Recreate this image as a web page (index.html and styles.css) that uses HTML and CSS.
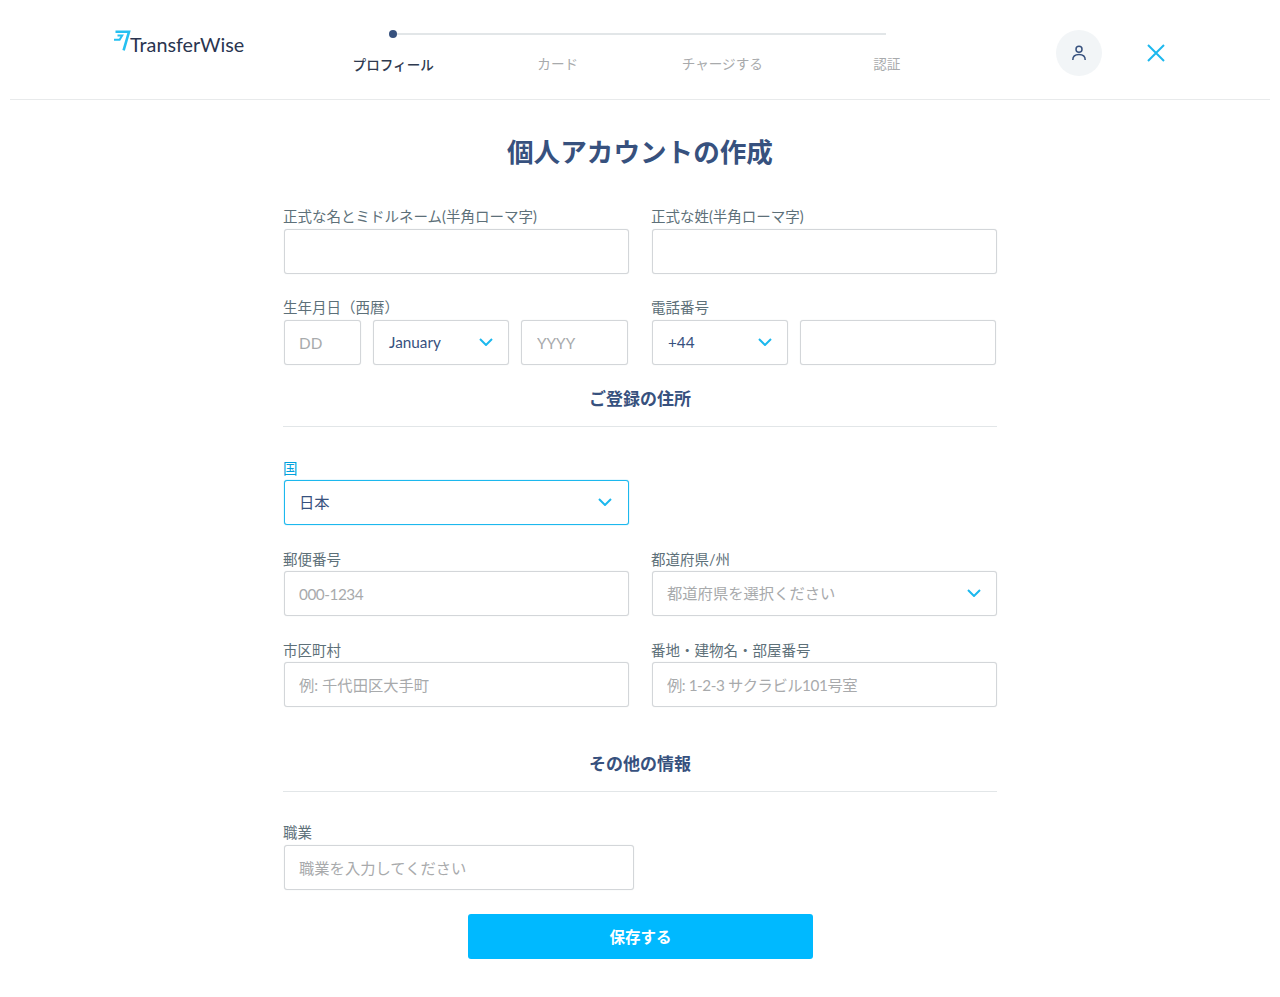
FILE: index.html
```html
<!DOCTYPE html>
<html lang="ja">
<head>
<meta charset="utf-8">
<title>個人アカウントの作成</title>
<link rel="stylesheet" href="styles.css">
</head>
<body>
<header class="topbar">
  <div class="logo">
    <svg class="logo-mark" width="18" height="21" viewBox="0 0 18 21" fill="none" stroke="#25c0f1"><path stroke-width="2.6" d="M1.5 1.8 H15 L9.6 20.4"/><path stroke-width="2" d="M3.5 5.4 H8.2 L5.6 9.8 H0"/></svg>
    <span class="logo-text">TransferWise</span>
  </div>
  <nav class="stepper">
    <div class="step step-active">プロフィール</div>
    <div class="step">カード</div>
    <div class="step">チャージする</div>
    <div class="step">認証</div>
  </nav>
  <div class="avatar">
    <svg width="18" height="18" viewBox="0 0 18 18" fill="none" stroke="#37517e" stroke-width="1.5"><circle cx="9" cy="5.2" r="3"/><path d="M2.8 16 C2.8 12.4 5 10.6 9 10.6 C13 10.6 15.2 12.4 15.2 16"/></svg>
  </div>
  <svg class="close" width="18" height="18" viewBox="0 0 18 18" fill="none" stroke="#1cb8ee" stroke-width="2"><path d="M1 1 L17 17 M17 1 L1 17"/></svg>
</header>

<main class="form">
  <h1 class="title">個人アカウントの作成</h1>

  <div class="row">
    <div class="field">
      <label class="label">正式な名とミドルネーム(半角ローマ字)</label>
      <input class="input" type="text">
    </div>
    <div class="field">
      <label class="label">正式な姓(半角ローマ字)</label>
      <input class="input" type="text">
    </div>
  </div>

  <div class="row">
    <div class="field">
      <label class="label">生年月日（西暦）</label>
      <div class="dob">
        <input class="input" type="text" placeholder="DD">
        <div class="select"><span>January</span><svg class="chev" width="14" height="8" viewBox="0 0 14 8"><path d="M1 1 L7 7 L13 1" fill="none" stroke="#1cb8ee" stroke-width="2"/></svg></div>
        <input class="input" type="text" placeholder="YYYY">
      </div>
    </div>
    <div class="field">
      <label class="label">電話番号</label>
      <div class="phone">
        <div class="select"><span>+44</span><svg class="chev" width="14" height="8" viewBox="0 0 14 8"><path d="M1 1 L7 7 L13 1" fill="none" stroke="#1cb8ee" stroke-width="2"/></svg></div>
        <input class="input" type="text">
      </div>
    </div>
  </div>

  <h2 class="section section-first">ご登録の住所</h2>

  <div class="row row-low">
    <div class="field">
      <label class="label label-focus">国</label>
      <div class="select select-focus"><span>日本</span><svg class="chev" width="14" height="8" viewBox="0 0 14 8"><path d="M1 1 L7 7 L13 1" fill="none" stroke="#1cb8ee" stroke-width="2"/></svg></div>
    </div>
  </div>

  <div class="row row-low">
    <div class="field">
      <label class="label">郵便番号</label>
      <input class="input input-tight" type="text" placeholder="000-1234">
    </div>
    <div class="field">
      <label class="label">都道府県/州</label>
      <div class="select select-empty"><span>都道府県を選択ください</span><svg class="chev" width="14" height="8" viewBox="0 0 14 8"><path d="M1 1 L7 7 L13 1" fill="none" stroke="#1cb8ee" stroke-width="2"/></svg></div>
    </div>
  </div>

  <div class="row row-low">
    <div class="field">
      <label class="label">市区町村</label>
      <input class="input" type="text" placeholder="例: 千代田区大手町">
    </div>
    <div class="field">
      <label class="label">番地・建物名・部屋番号</label>
      <input class="input input-tight" type="text" placeholder="例: 1-2-3 サクラビル101号室">
    </div>
  </div>

  <h2 class="section section-second">その他の情報</h2>

  <div class="field field-job">
    <label class="label">職業</label>
    <input class="input" type="text" placeholder="職業を入力してください">
  </div>

  <button class="submit" type="button">保存する</button>
</main>
</body>
</html>
```
FILE: styles.css
```css
* { box-sizing: border-box; }
html, body { margin: 0; padding: 0; }
body {
  background: #fff;
  font-family: Lato, "Noto Sans CJK JP", sans-serif;
  color: #37517e;
  height: 997px;
  overflow: hidden;
}
.topbar {
  display: flex;
  align-items: flex-start;
  height: 100px;
  margin: 0 10px -1px;
  border-bottom: 1px solid #e8eaeb;
}
.logo {
  display: flex;
  align-items: flex-start;
  width: 197px;
  margin-left: 104px;
  padding-top: 30px;
}
.logo-mark { flex: none; }
.logo-text {
  margin: 1px 0 0 -2px;
  font-family: Lato, sans-serif;
  font-size: 19.8px;
  line-height: 26px;
  color: #2a3550;
}
.stepper {
  position: relative;
  display: grid;
  grid-template-columns: repeat(4, 164.5px);
  width: 658px;
  padding-top: 54px;
}
.stepper::before {
  content: "";
  position: absolute;
  left: 82px;
  right: 83px;
  top: 33px;
  height: 2px;
  background: #e2e6e8;
}
.stepper::after {
  content: "";
  position: absolute;
  left: 78px;
  top: 30px;
  width: 8px;
  height: 8px;
  border-radius: 50%;
  background: #37517e;
}
.step {
  text-align: center;
  font-size: 13.6px;
  line-height: 20px;
  color: #a8aaac;
}
.step-active { color: #2e3a4f; font-weight: 500; padding-top: 1px; }
.avatar {
  display: flex;
  align-items: center;
  justify-content: center;
  flex: none;
  width: 46px;
  height: 46px;
  margin: 30px 0 0 87px;
  border-radius: 50%;
  background: #f2f5f7;
}
.close { flex: none; margin: 44px 0 0 45px; }

.form { width: 713px; margin-left: 284px; }
.title {
  margin: 0 0 0 -1px;
  padding-top: 34px;
  height: 108px;
  font-size: 26.6px;
  line-height: 38px;
  font-weight: 700;
  text-align: center;
  color: #37517e;
}
.row {
  display: grid;
  grid-template-columns: 345px 345px;
  column-gap: 23px;
  margin-bottom: 24px;
}
.field { min-width: 0; }
.field-job { width: 350px; margin-bottom: 24px; }
.label {
  display: block;
  height: 22px;
  margin-left: -1px;
  font-size: 14.5px;
  line-height: 20px;
  color: #5d7079;
}
.row-low .label { padding-top: 1px; }
.label-focus { color: #00a2dd; }
.input, .select {
  display: block;
  width: 100%;
  height: 45px;
  border: 1px solid #d3d6d9;
  border-radius: 3px;
  background: #fff;
  box-shadow: 0 0 1px #d8dadd;
  padding: 0 14px;
  font-family: inherit;
  font-size: 15.3px;
  color: #37517e;
  outline: none;
}
.input::placeholder { color: #a8aaac; opacity: 1; }
.input-tight { letter-spacing: -0.45px; }
.select {
  display: flex;
  align-items: center;
  justify-content: space-between;
  line-height: 20px;
  padding-bottom: 2px;
}
.select-focus { border-color: #1cb8ee; box-shadow: 0 0 1px #1cb8ee; }
.select-focus .chev { margin-right: 2px; }
.select-empty { color: #a8aaac; }
.chev { flex: none; margin-right: 1px; }
.dob {
  display: grid;
  grid-template-columns: 77px 136px 107px;
  column-gap: 12px;
}
.phone {
  display: grid;
  grid-template-columns: 136px 196px;
  column-gap: 12px;
}
.dob .select, .dob .select ~ .input, .phone .select { padding-left: 15px; }
.section {
  margin: 0;
  height: 39px;
  font-size: 17px;
  line-height: 22px;
  font-weight: 700;
  text-align: center;
  color: #37517e;
  border-bottom: 1px solid #e2e6e8;
}
.section-first { margin: -1px 0 31px -1px; }
.section-second { margin: 46px 0 31px -1px; }
.submit {
  display: block;
  width: 345px;
  height: 45px;
  margin: 0 auto;
  padding: 0 0 2px;
  border: 0;
  border-radius: 3px;
  background: #00b9ff;
  color: #fff;
  font-family: inherit;
  font-size: 15.5px;
  font-weight: 700;
}
```
